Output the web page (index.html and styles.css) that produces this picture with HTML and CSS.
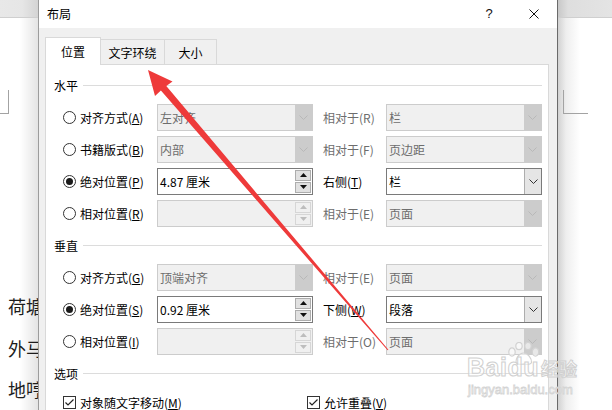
FILE: index.html
```html
<!DOCTYPE html>
<html lang="zh-CN">
<head>
<meta charset="utf-8">
<title>布局</title>
<link rel="stylesheet" href="styles.css">
</head>
<body>
<div class="screen">
  <div class="doc doc-left">
    <div class="doc-bar"></div>
    <div class="crop crop-left"></div>
    <div class="doc-text">
      <p>荷塘</p>
      <p>外马</p>
      <p>地哼</p>
    </div>
  </div>

  <div class="dialog">
    <div class="titlebar">
      <span class="title">布局</span>
      <span class="help">?</span>
      <span class="close"><svg width="10" height="10" viewBox="0 0 10 10"><path d="M0.5 0.5L9.5 9.5M9.5 0.5L0.5 9.5" stroke="#111" stroke-width="1" fill="none"/></svg></span>
    </div>
    <div class="dlg-body">
      <div class="tabs">
        <div class="tab tab-active t1">位置</div>
        <div class="tab t2">文字环绕</div>
        <div class="tab t3">大小</div>
      </div>
      <div class="panel">
        <div class="section"><span>水平</span><i class="rule"></i></div>

        <div class="row">
          <div class="opt"><span class="radio"></span><span>对齐方式(<u>A</u>)</span></div>
          <div class="combo dis"><span class="val">左对齐</span><span class="btn"><svg width="9" height="5" viewBox="0 0 9 5"><path d="M0.5 0.5L4.5 4.5L8.5 0.5" fill="none" stroke="currentColor"/></svg></span></div>
          <div class="lbl2 dim">相对于(R)</div>
          <div class="combo dis"><span class="val">栏</span><span class="btn"><svg width="9" height="5" viewBox="0 0 9 5"><path d="M0.5 0.5L4.5 4.5L8.5 0.5" fill="none" stroke="currentColor"/></svg></span></div>
        </div>

        <div class="row">
          <div class="opt"><span class="radio"></span><span>书籍版式(<u>B</u>)</span></div>
          <div class="combo dis"><span class="val">内部</span><span class="btn"><svg width="9" height="5" viewBox="0 0 9 5"><path d="M0.5 0.5L4.5 4.5L8.5 0.5" fill="none" stroke="currentColor"/></svg></span></div>
          <div class="lbl2 dim">相对于(F)</div>
          <div class="combo dis"><span class="val">页边距</span><span class="btn"><svg width="9" height="5" viewBox="0 0 9 5"><path d="M0.5 0.5L4.5 4.5L8.5 0.5" fill="none" stroke="currentColor"/></svg></span></div>
        </div>

        <div class="row">
          <div class="opt"><span class="radio on"></span><span>绝对位置(<u>P</u>)</span></div>
          <div class="spin"><span class="val">4.87 厘米</span><span class="arrows"><span class="sbtn"><svg width="7" height="4" viewBox="0 0 7 4"><path d="M0 4L3.5 0L7 4Z" fill="currentColor"/></svg></span><span class="sbtn"><svg width="7" height="4" viewBox="0 0 7 4"><path d="M0 0L3.5 4L7 0Z" fill="currentColor"/></svg></span></span></div>
          <div class="lbl2">右侧(<u>T</u>)</div>
          <div class="combo"><span class="val">栏</span><span class="btn"><svg width="9" height="5" viewBox="0 0 9 5"><path d="M0.5 0.5L4.5 4.5L8.5 0.5" fill="none" stroke="currentColor"/></svg></span></div>
        </div>

        <div class="row">
          <div class="opt"><span class="radio"></span><span>相对位置(<u>R</u>)</span></div>
          <div class="spin dis"><span class="val"></span><span class="arrows"><span class="sbtn"><svg width="7" height="4" viewBox="0 0 7 4"><path d="M0 4L3.5 0L7 4Z" fill="currentColor"/></svg></span><span class="sbtn"><svg width="7" height="4" viewBox="0 0 7 4"><path d="M0 0L3.5 4L7 0Z" fill="currentColor"/></svg></span></span></div>
          <div class="lbl2 dim">相对于(E)</div>
          <div class="combo dis"><span class="val">页面</span><span class="btn"><svg width="9" height="5" viewBox="0 0 9 5"><path d="M0.5 0.5L4.5 4.5L8.5 0.5" fill="none" stroke="currentColor"/></svg></span></div>
        </div>

        <div class="section"><span>垂直</span><i class="rule"></i></div>

        <div class="row">
          <div class="opt"><span class="radio"></span><span>对齐方式(<u>G</u>)</span></div>
          <div class="combo dis"><span class="val">顶端对齐</span><span class="btn"><svg width="9" height="5" viewBox="0 0 9 5"><path d="M0.5 0.5L4.5 4.5L8.5 0.5" fill="none" stroke="currentColor"/></svg></span></div>
          <div class="lbl2 dim">相对于(E)</div>
          <div class="combo dis"><span class="val">页面</span><span class="btn"><svg width="9" height="5" viewBox="0 0 9 5"><path d="M0.5 0.5L4.5 4.5L8.5 0.5" fill="none" stroke="currentColor"/></svg></span></div>
        </div>

        <div class="row">
          <div class="opt"><span class="radio on"></span><span>绝对位置(<u>S</u>)</span></div>
          <div class="spin"><span class="val">0.92 厘米</span><span class="arrows"><span class="sbtn"><svg width="7" height="4" viewBox="0 0 7 4"><path d="M0 4L3.5 0L7 4Z" fill="currentColor"/></svg></span><span class="sbtn"><svg width="7" height="4" viewBox="0 0 7 4"><path d="M0 0L3.5 4L7 0Z" fill="currentColor"/></svg></span></span></div>
          <div class="lbl2">下侧(<u>W</u>)</div>
          <div class="combo"><span class="val">段落</span><span class="btn"><svg width="9" height="5" viewBox="0 0 9 5"><path d="M0.5 0.5L4.5 4.5L8.5 0.5" fill="none" stroke="currentColor"/></svg></span></div>
        </div>

        <div class="row">
          <div class="opt"><span class="radio"></span><span>相对位置(<u>I</u>)</span></div>
          <div class="spin dis"><span class="val"></span><span class="arrows"><span class="sbtn"><svg width="7" height="4" viewBox="0 0 7 4"><path d="M0 4L3.5 0L7 4Z" fill="currentColor"/></svg></span><span class="sbtn"><svg width="7" height="4" viewBox="0 0 7 4"><path d="M0 0L3.5 4L7 0Z" fill="currentColor"/></svg></span></span></div>
          <div class="lbl2 dim">相对于(O)</div>
          <div class="combo dis"><span class="val">页面</span><span class="btn"><svg width="9" height="5" viewBox="0 0 9 5"><path d="M0.5 0.5L4.5 4.5L8.5 0.5" fill="none" stroke="currentColor"/></svg></span></div>
        </div>

        <div class="section"><span>选项</span><i class="rule"></i></div>

        <div class="checks">
          <div class="opt"><span class="check"><svg width="11" height="11" viewBox="0 0 11 11"><path d="M1.5 5.5L4 8L9.5 2.5" fill="none" stroke="#222" stroke-width="1.2"/></svg></span><span>对象随文字移动(<u>M</u>)</span></div>
          <div class="opt opt2"><span class="check"><svg width="11" height="11" viewBox="0 0 11 11"><path d="M1.5 5.5L4 8L9.5 2.5" fill="none" stroke="#222" stroke-width="1.2"/></svg></span><span>允许重叠(<u>V</u>)</span></div>
        </div>
      </div>
    </div>
  </div>

  <div class="doc doc-right">
    <div class="doc-bar"></div>
    <div class="crop crop-right"></div>
  </div>

  <div class="watermark">
    <svg class="paw" width="34" height="24" viewBox="0 0 34 24">
      <ellipse cx="5" cy="10" rx="3.2" ry="4.2"/>
      <ellipse cx="12" cy="4" rx="3.2" ry="3.6"/>
      <ellipse cx="21" cy="4" rx="3.2" ry="3.6"/>
      <ellipse cx="28.5" cy="10" rx="3.2" ry="4.2"/>
      <path d="M16.5 11C12 11 8.5 17 9 20.5C9.5 23 13 22.5 16.5 22C20 22.5 24 23 24.5 20.5C25 17 21 11 16.5 11Z"/>
    </svg>
    <div class="wm-main"><span class="wm-latin">Baidu</span><span class="wm-cjk">经验</span></div>
    <div class="wm-url">jingyan.baidu.com</div>
  </div>

  <svg class="arrow" width="612" height="410" viewBox="0 0 612 410">
    <polygon points="148,70 172.5,81.5 166.3,86 388.4,349.7 387.6,350.3 160.9,90.6 155,96" fill="#ee3a3a"/>
  </svg>
</div>
</body>
</html>
```

FILE: styles.css
```css
* {
  box-sizing: border-box;
  margin: 0;
  padding: 0;
}

html, body {
  width: 612px;
  height: 410px;
  overflow: hidden;
  background: #ffffff;
}

body {
  font-family: "Noto Sans CJK SC", "Microsoft YaHei", sans-serif;
  font-size: 12px;
  line-height: 17px;
  color: #000000;
}

.screen {
  position: relative;
  display: flex;
  width: 612px;
  height: 410px;
  overflow: hidden;
}

/* ---------- document behind the dialog ---------- */
.doc {
  display: flex;
  flex-direction: column;
  flex: none;
  overflow: hidden;
}

.doc-left {
  width: 38px;
  background: linear-gradient(to right, #ffffff 0, #ffffff 20px, #e4e4e4 38px);
}

.doc-right {
  width: 54px;
  background: linear-gradient(to right, #d2d2d2 0, #eeeeee 8px, #ffffff 22px);
}

.doc-bar {
  height: 18px;
  flex: none;
  border-bottom: 1px solid #cfcfcf;
}

.doc-left .doc-bar {
  background: linear-gradient(to right, #e8e8e8 0, #e6e6e6 22px, #d4d4d4 38px);
}

.doc-right .doc-bar {
  background: linear-gradient(to right, #c8c8c8 0, #dedede 10px, #e4e4e4 54px);
}

.crop {
  flex: none;
  height: 24px;
  margin-top: 72px;
  border-bottom: 1px solid #a3a3a3;
}

.crop-left {
  width: 9px;
  border-right: 1px solid #a3a3a3;
}

.crop-right {
  width: 25px;
  margin-left: 5px;
  border-left: 1px solid #a3a3a3;
}

.doc-text {
  margin-top: 172px;
  padding-left: 8px;
  font-size: 18px;
  line-height: 41.5px;
  color: #1c1c1c;
  white-space: nowrap;
}

/* ---------- dialog ---------- */
.dialog {
  width: 520px;
  flex: none;
  display: flex;
  flex-direction: column;
  border-left: 1px solid #9c9c9c;
  border-right: 1px solid #6a6a6a;
  background: #f0f0f0;
}

.titlebar {
  height: 28px;
  flex: none;
  display: flex;
  align-items: center;
  padding: 0 8px;
  background: #ffffff;
}

.title {
  line-height: 28px;
}

.help {
  margin-left: auto;
  width: 20px;
  text-align: center;
  font-family: "Liberation Sans", Arial, sans-serif;
  font-size: 13px;
  line-height: 28px;
  color: #111111;
}

.close {
  width: 30px;
  margin-left: 20px;
  height: 28px;
  display: flex;
  align-items: center;
  justify-content: center;
}

.dlg-body {
  flex: 1;
  display: flex;
  flex-direction: column;
  padding: 9px 8px 0 6px;
  background: #f0f0f0;
}

.tabs {
  display: flex;
  align-items: flex-end;
  height: 27px;
  flex: none;
}

.tab {
  height: 25px;
  display: flex;
  align-items: center;
  justify-content: center;
  border-top: 1px solid #d9d9d9;
  border-right: 1px solid #d9d9d9;
  background: #f0f0f0;
  padding-top: 1px;
}

.tab-active {
  position: relative;
  z-index: 1;
  height: 28px;
  margin-bottom: -1px;
  border-left: 1px solid #d9d9d9;
  background: #ffffff;
  padding-top: 0;
  padding-bottom: 1px;
}

.t1 { width: 56px; }
.t2 { width: 64px; }
.t3 { width: 52px; }

.panel {
  flex: 1;
  border: 1px solid #d9d9d9;
  border-bottom: none;
  background: #ffffff;
  padding: 4px 6px 0 0;
}

.section {
  height: 32px;
  display: flex;
  align-items: center;
  gap: 5px;
  padding-left: 8px;
}

.rule {
  flex: 1;
  height: 1px;
  background: #dcdcdc;
}

.row {
  display: grid;
  grid-template-columns: 111px 156px 73px 156px;
  height: 32px;
  align-items: center;
}

.opt {
  display: flex;
  align-items: center;
  gap: 4px;
  padding-left: 17px;
  white-space: nowrap;
}

.radio {
  width: 13px;
  height: 13px;
  flex: none;
  border: 1px solid #333333;
  border-radius: 50%;
  background: #ffffff;
  display: flex;
  align-items: center;
  justify-content: center;
}

.radio.on::after {
  content: "";
  width: 7px;
  height: 7px;
  border-radius: 50%;
  background: #1a1a1a;
}

.check {
  width: 13px;
  height: 13px;
  flex: none;
  border: 1px solid #333333;
  background: #ffffff;
  display: flex;
  align-items: center;
  justify-content: center;
}

.lbl2 {
  padding-left: 10px;
  white-space: nowrap;
}

.dim {
  color: #6d6d6d;
}

u {
  text-decoration: underline;
  text-underline-offset: 1px;
}

/* combo boxes */
.combo {
  height: 27px;
  display: flex;
  border: 1px solid #7a7a7a;
  background: #ffffff;
}

.combo .val {
  flex: 1;
  padding-left: 2px;
  line-height: 25px;
  white-space: nowrap;
}

.combo .btn {
  width: 17px;
  flex: none;
  display: flex;
  align-items: center;
  justify-content: center;
  background: #e5e5e5;
  border-left: 1px solid #adadad;
  color: #333333;
}

.combo.dis {
  border-color: #cccccc;
  background: #f0f0f0;
  color: #6d6d6d;
}

.combo.dis .btn {
  background: #cccccc;
  border-left: none;
  color: #b8b8b8;
}

/* spinner inputs */
.spin {
  height: 27px;
  display: flex;
  border: 1px solid #7a7a7a;
  background: #ffffff;
  padding: 1px;
}

.spin .val {
  flex: 1;
  padding-left: 1px;
  line-height: 23px;
  white-space: nowrap;
}

.spin .arrows {
  width: 16px;
  flex: none;
  display: flex;
  flex-direction: column;
  gap: 1px;
}

.sbtn {
  flex: 1;
  display: flex;
  align-items: center;
  justify-content: center;
  background: #e1e1e1;
  border: 1px solid #adadad;
  color: #111111;
}

.spin.dis {
  border-color: #cccccc;
  background: #f0f0f0;
}

.spin.dis .sbtn {
  background: #f0f0f0;
  border-color: #d6d6d6;
  color: #bdbdbd;
}

.checks {
  display: grid;
  grid-template-columns: 261px auto;
  height: 26px;
  align-items: center;
}

.opt2 {
  padding-left: 0;
}

/* ---------- overlays ---------- */
.watermark {
  position: absolute;
  left: 467px;
  top: 340px;
  width: 116px;
  height: 60px;
  pointer-events: none;
}

.paw {
  position: absolute;
  left: 40px;
  top: 2px;
  fill: rgba(255, 255, 255, 0.55);
  stroke: #d2d2d2;
  stroke-width: 1.2;
}

.wm-main {
  position: absolute;
  left: 0;
  top: 12px;
  display: flex;
  align-items: baseline;
  white-space: nowrap;
}

.wm-latin {
  font-family: "Liberation Sans", Arial, sans-serif;
  font-weight: bold;
  font-size: 25px;
  line-height: 30px;
  letter-spacing: 0.5px;
  color: rgba(255, 255, 255, 0.5);
  -webkit-text-stroke: 1px #d0d0d0;
}

.wm-cjk {
  margin-left: 2px;
  font-size: 18px;
  line-height: 30px;
  font-weight: bold;
  color: rgba(255, 255, 255, 0.5);
  -webkit-text-stroke: 1px #d0d0d0;
}

.wm-url {
  position: absolute;
  left: 1px;
  top: 42px;
  font-family: "Liberation Sans", Arial, sans-serif;
  font-size: 13px;
  line-height: 16px;
  white-space: nowrap;
  color: rgba(255, 255, 255, 0.5);
  -webkit-text-stroke: 0.8px #d4d4d4;
}

.arrow {
  position: absolute;
  left: 0;
  top: 0;
  pointer-events: none;
}
```
